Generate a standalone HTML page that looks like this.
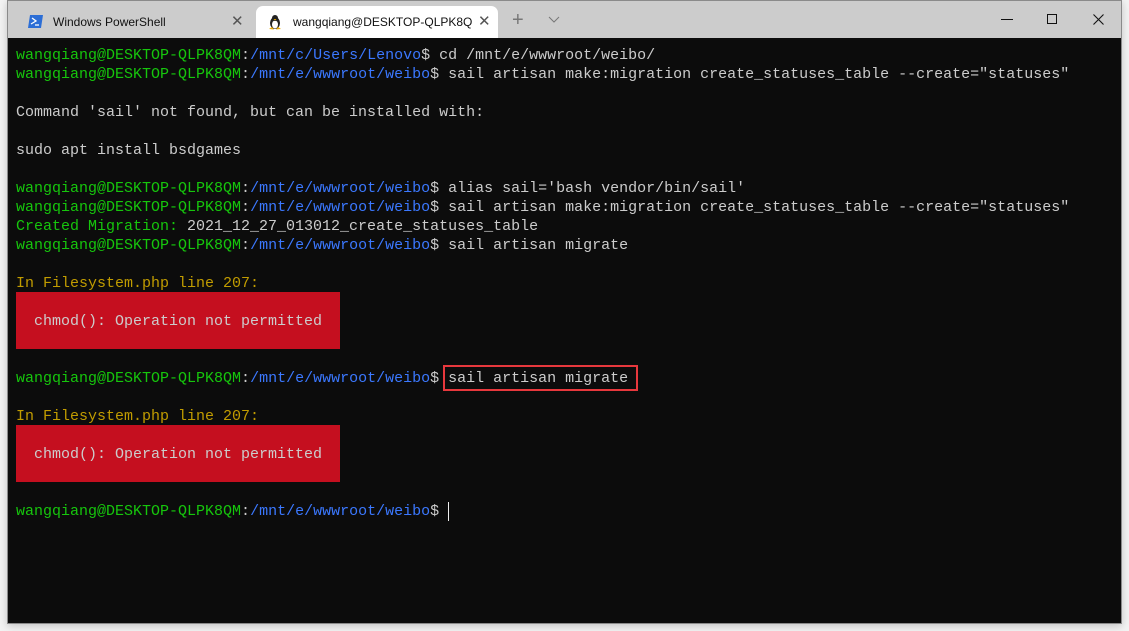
<!DOCTYPE html>
<html><head><meta charset="utf-8"><style>
*{margin:0;padding:0;box-sizing:border-box}
body{width:1129px;height:631px;background:#f3f3f3;position:relative;overflow:hidden;font-family:"Liberation Sans",sans-serif}
#win{position:absolute;left:7px;top:0;width:1115px;height:624px;border:1px solid #8a8a8a;background:#0c0c0c;box-shadow:0 2px 8px rgba(0,0,0,.2)}
#bar{position:absolute;left:0;top:0;width:100%;height:37px;background:#cccccc}
.tab{position:absolute;top:5px;height:32px;font-size:12px;color:#111;line-height:32px}
#t1{left:0;width:247px}
#t2{left:248px;width:242px;background:#fff;border-radius:7px 7px 0 0}
.x{position:absolute;font-size:15px;color:#555}
#term{position:absolute;left:8px;top:45px;font-family:"Liberation Mono",monospace;font-size:15px;line-height:19px;color:#cccccc;white-space:pre}
.g{color:#16c60c}.b{color:#3b78ff}.y{color:#c19c00}
.err{position:absolute;left:8px;width:324px;height:57px;background:#c50f1f}
.hl{position:absolute;left:435px;top:364px;width:195px;height:26px;border:2px solid #e8383d}
.cur{position:absolute;left:440px;top:501px;width:1px;height:19px;background:#eee}
</style></head><body>
<div id="win">
<div id="bar">
 <div class="tab" id="t1">
  <svg style="position:absolute;left:20px;top:9px" width="15" height="13" viewBox="0 0 15 13"><path d="M2 0h13l-2 13H0z" fill="#2c6ed6"/><path d="M4 3l4 3-5 3" stroke="#fff" stroke-width="1.3" fill="none"/><path d="M7 10h4" stroke="#fff" stroke-width="1.3"/></svg>
  <span style="position:absolute;left:45px">Windows PowerShell</span>
  <span class="x" style="left:223px;top:0">✕</span>
 </div>
 <div class="tab" id="t2">
  <svg style="position:absolute;left:12px;top:8px" width="14" height="16" viewBox="0 0 14 16"><ellipse cx="7" cy="9" rx="5" ry="6" fill="#222"/><ellipse cx="7" cy="10.5" rx="3" ry="4" fill="#fff"/><circle cx="7" cy="4" r="3" fill="#222"/><path d="M5.5 5h3l-1.5 1.5z" fill="#e8a800"/><path d="M1 15l3-2 2 2.5zM13 15l-3-2-2 2.5z" fill="#e8a800"/></svg>
  <span style="position:absolute;left:37px">wangqiang@DESKTOP-QLPK8Q</span>
  <span class="x" style="left:222px;top:0">✕</span>
 </div>
 <span class="x" style="left:504px;top:8px;font-size:20px;color:#777">+</span>
 <svg style="position:absolute;left:540px;top:15px" width="12" height="7"><path d="M1 1l5 5 5-5" stroke="#777" fill="none"/></svg>
 <div style="position:absolute;left:993px;top:18px;width:12px;height:1px;background:#111"></div>
 <div style="position:absolute;left:1039px;top:13px;width:10px;height:10px;border:1px solid #111"></div>
 <svg style="position:absolute;left:1085px;top:13px" width="11" height="11"><path d="M0.5 0.5l10 10M10.5 0.5l-10 10" stroke="#111" stroke-width="1.1"/></svg>
</div>
<div class="err" style="top:291px"></div>
<div class="err" style="top:424px"></div>
<div class="hl"></div>
<div class="cur"></div>
<div id="term"><span class="g">wangqiang@DESKTOP-QLPK8QM</span>:<span class="b">/mnt/c/Users/Lenovo</span>$ cd /mnt/e/wwwroot/weibo/
<span class="g">wangqiang@DESKTOP-QLPK8QM</span>:<span class="b">/mnt/e/wwwroot/weibo</span>$ sail artisan make:migration create_statuses_table --create="statuses"

Command 'sail' not found, but can be installed with:

sudo apt install bsdgames

<span class="g">wangqiang@DESKTOP-QLPK8QM</span>:<span class="b">/mnt/e/wwwroot/weibo</span>$ alias sail='bash vendor/bin/sail'
<span class="g">wangqiang@DESKTOP-QLPK8QM</span>:<span class="b">/mnt/e/wwwroot/weibo</span>$ sail artisan make:migration create_statuses_table --create="statuses"
<span class="g">Created Migration:</span> 2021_12_27_013012_create_statuses_table
<span class="g">wangqiang@DESKTOP-QLPK8QM</span>:<span class="b">/mnt/e/wwwroot/weibo</span>$ sail artisan migrate

<span class="y">In Filesystem.php line 207:</span>

  chmod(): Operation not permitted


<span class="g">wangqiang@DESKTOP-QLPK8QM</span>:<span class="b">/mnt/e/wwwroot/weibo</span>$ sail artisan migrate

<span class="y">In Filesystem.php line 207:</span>

  chmod(): Operation not permitted


<span class="g">wangqiang@DESKTOP-QLPK8QM</span>:<span class="b">/mnt/e/wwwroot/weibo</span>$ </div>
</div>
</body></html>
